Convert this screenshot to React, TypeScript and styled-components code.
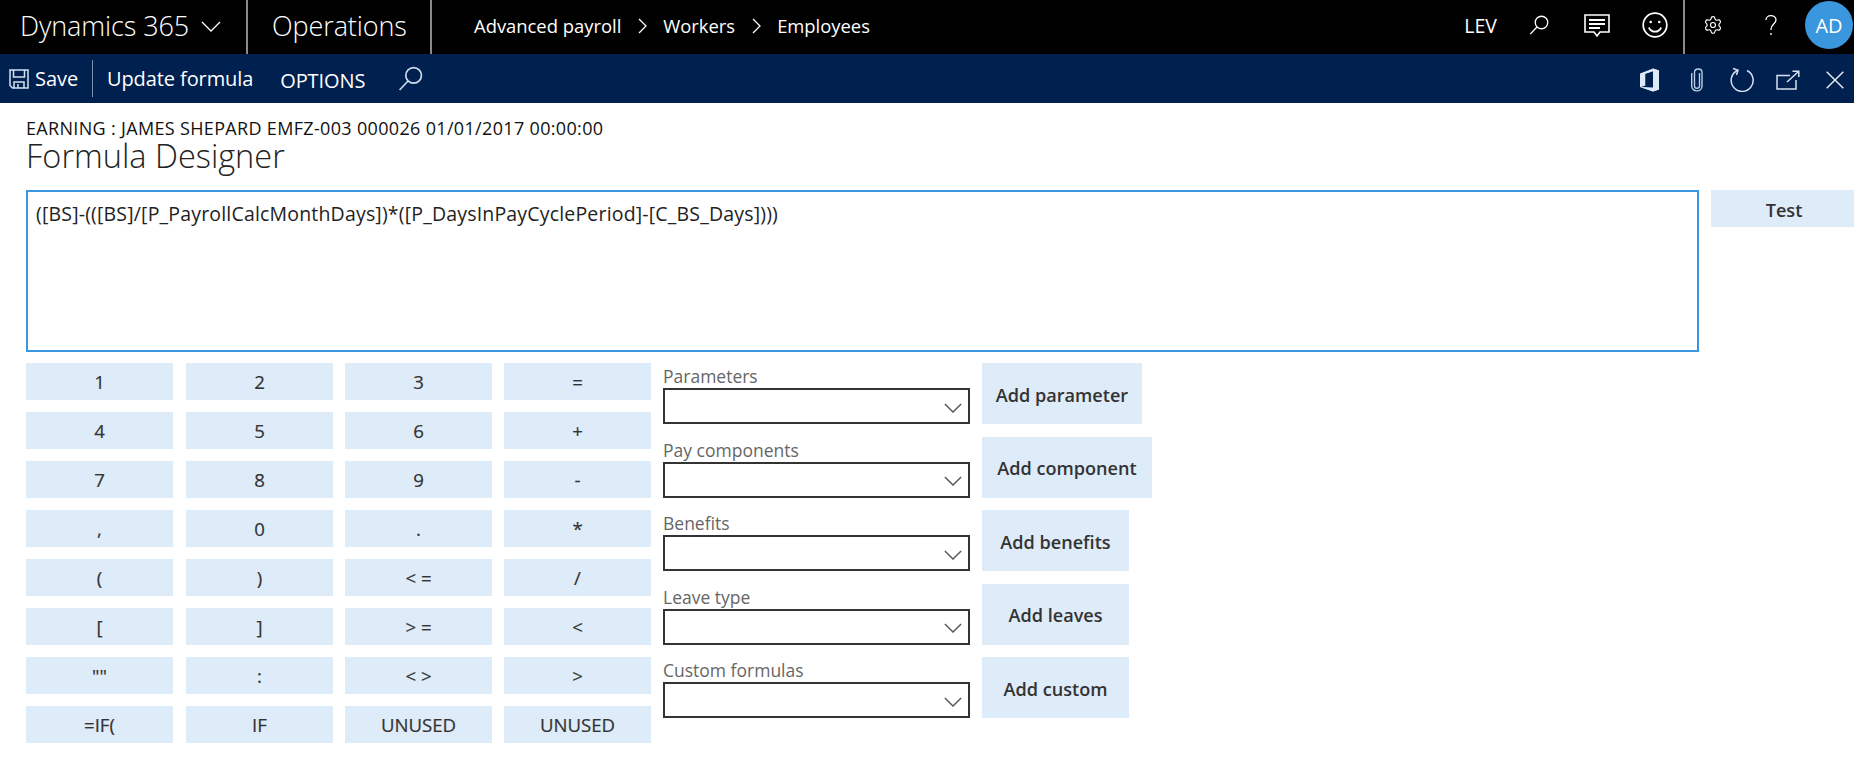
import React from 'react';
import styled, { createGlobalStyle } from 'styled-components';
import { Settings } from 'lucide-react';

const GlobalStyle = createGlobalStyle`
  html, body { margin: 0; padding: 0; background: #fff; overflow: hidden; }
  * { box-sizing: border-box; }
  body { font-family: "Open Sans", "Noto Sans", "Liberation Sans", sans-serif; }
`;

const Page = styled.div`
  width: 1854px;
  height: 781px;
  overflow: hidden;
`;

const TopBar = styled.header`
  display: flex;
  align-items: stretch;
  height: 54px;
  background: #000;
  color: #fff;
`;

const Brand = styled.div`
  display: flex;
  align-items: center;
  width: 248px;
  padding: 0 0 4px 20px;
  border-right: 2px solid #8a8a8a;
  font-size: 27px;
  font-weight: 300;
  letter-spacing: -0.1px;
  svg { margin-left: 12px; margin-top: 2px; }
`;

const Product = styled.div`
  display: flex;
  align-items: center;
  width: 184px;
  padding: 0 0 4px 24px;
  border-right: 2px solid #8a8a8a;
  font-size: 27px;
  font-weight: 300;
  letter-spacing: -0.1px;
`;

const Breadcrumb = styled.nav`
  display: flex;
  align-items: center;
  padding: 0 0 4px 42px;
  font-size: 18.4px;
  svg { margin: 1px 16px 0 17px; }
`;

const TopRight = styled.div`
  display: flex;
  align-items: center;
  margin-left: auto;
  padding: 0 1px 4px 0;
`;

const Company = styled.span`
  font-size: 19.5px;
`;

const IconCell = styled.span<{ $w: number; $ml: number }>`
  display: flex;
  flex: none;
  align-items: center;
  justify-content: center;
  width: ${(p) => p.$w}px;
  margin-left: ${(p) => p.$ml}px;
`;

const TopDivider = styled.span`
  width: 2px;
  height: 54px;
  margin: 0 0 -4px 15px;
  background: #8a8a8a;
`;

const Avatar = styled.span`
  display: flex;
  align-items: center;
  justify-content: center;
  width: 48px;
  height: 48px;
  margin-left: 28px;
  border-radius: 50%;
  background: #3a96dd;
  font-size: 20px;
`;

const CommandBar = styled.div`
  display: flex;
  align-items: center;
  height: 49px;
  background: #002050;
  color: #fff;
`;

const SaveButton = styled.div`
  display: flex;
  align-items: center;
  gap: 6px;
  width: 93px;
  height: 37px;
  padding-left: 9px;
  border-right: 1px solid #7d8fa8;
  font-size: 20px;
`;

const CommandText = styled.span<{ $gap: number; $drop?: number }>`
  margin-left: ${(p) => p.$gap}px;
  padding-top: ${(p) => p.$drop ?? 0}px;
  font-size: 20px;
  letter-spacing: -0.1px;
`;

const CommandRight = styled.div`
  display: flex;
  align-items: center;
  margin-left: auto;
  padding: 2px 10px 0 0;
`;

const Content = styled.main`
  padding: 14px 0 0 26px;
`;

const Caption = styled.div`
  font-size: 18px;
  line-height: 22px;
  letter-spacing: 0.33px;
  color: #111;
`;

const Title = styled.h1`
  margin: 0;
  font-size: 32.5px;
  line-height: 34px;
  font-weight: 300;
  color: #222;
`;

const EditorRow = styled.div`
  display: flex;
  gap: 12px;
  margin-top: 17px;
`;

const FormulaBox = styled.div`
  flex: none;
  width: 1673px;
  height: 162px;
  padding: 10px 8px;
  border: 2px solid #3a96dd;
  font-size: 19.5px;
  line-height: 24px;
  letter-spacing: 0.18px;
  color: #222;
`;

const ActionButton = styled.button<{ $w?: number; $h?: number }>`
  flex: none;
  width: ${(p) => p.$w ?? 147}px;
  height: ${(p) => p.$h ?? 37}px;
  padding: 2px 0 0;
  border: 0;
  background: #deebf8;
  color: #333;
  font-family: inherit;
  font-size: 18.1px;
  font-weight: 600;
`;

const Designer = styled.div`
  display: flex;
  gap: 12px;
  margin-top: 11px;
`;

const Keypad = styled.div`
  display: grid;
  grid-template-columns: 160px 159px 159px 147px;
  grid-auto-rows: 37px;
  row-gap: 12px;
`;

const Key = styled(ActionButton)`
  padding: 0;
  font-weight: 400;
  font-size: 18.6px;
  -webkit-text-stroke: 0.2px #333;
`;

const Lookups = styled.div`
  display: flex;
  flex-direction: column;
  gap: 12.5px;
`;

const LookupRow = styled.div`
  display: flex;
  gap: 12px;
  height: 61px;
`;

const Field = styled.div`
  width: 307px;
`;

const FieldLabel = styled.label`
  display: block;
  height: 25px;
  font-size: 17.5px;
  line-height: 26px;
  color: #666;
`;

const SelectBox = styled.div`
  display: flex;
  align-items: center;
  justify-content: flex-end;
  height: 36px;
  padding: 3px 6px 0 0;
  border: 2px solid #333;
  background: #fff;
`;

const Chevron = ({ size = 18, color = '#fff', sw = 1.3 }: { size?: number; color?: string; sw?: number }) => (
  <svg width={size} height={size / 2 + 1} viewBox="0 0 20 11" fill="none" stroke={color} strokeWidth={sw * 20 / size}>
    <path d="M1 1l9 9 9-9" />
  </svg>
);

const Crumb = () => (
  <svg width="9" height="16" viewBox="0 0 9 16" fill="none" stroke="#fff" strokeWidth="1.3">
    <path d="M1 1l7 7-7 7" />
  </svg>
);

const SearchIcon = ({ size, color }: { size: number; color: string }) => (
  <svg width={size} height={size} viewBox="0 0 24 24" fill="none" stroke={color} strokeWidth="1.6">
    <circle cx="15" cy="9" r="7.5" />
    <path d="M9.600 14.400L1.500 23" />
  </svg>
);

const MessageIcon = () => (
  <svg width="26" height="26" viewBox="0 -2 26 26" fill="none" stroke="#fff">
    <path d="M1 1h24v17H16l-3 4-3-4H1z" strokeWidth="1.6" />
    <path d="M5 6h16M5 10h16M5 14h11" strokeWidth="1.8" />
  </svg>
);

const SmileIcon = () => (
  <svg width="26" height="26" viewBox="0 0 26 26" fill="none" stroke="#fff" strokeWidth="1.7">
    <circle cx="13" cy="13" r="11.800" />
    <circle cx="8.700" cy="10" r="1.300" fill="#fff" stroke="none" />
    <circle cx="17.300" cy="10" r="1.300" fill="#fff" stroke="none" />
    <path d="M6.800 15.500c1.500 3 3.600 4.200 6.200 4.200s4.700-1.200 6.200-4.200" />
  </svg>
);

const HelpIcon = () => (
  <svg width="12" height="21" viewBox="0 0 12 21" fill="none" stroke="#fff" strokeWidth="1.3">
    <path d="M1 5c0-2.600 2-4.300 4.800-4.300S11 2.400 11 5c0 3.800-5 4.200-5 9v1" />
    <circle cx="6" cy="19" r=".9" fill="#fff" stroke="none" />
  </svg>
);

const SaveIcon = () => (
  <svg width="20" height="20" viewBox="0 0 20 20" fill="none" stroke="#d5e2f0" strokeWidth="1.5">
    <path d="M1 1h18v18H3.500L1 16.500z" />
    <path d="M4.500 1v7h11V1M5 19v-6h10v6M9 15v4" />
  </svg>
);

const OfficeIcon = () => (
  <svg width="20" height="24" viewBox="0 0 20 24" fill="#dce9f6">
    <path d="M0 5.500L13 .5l6 2v19l-6 2-13-4.500zM13 3.500L5.500 6v11.500l7.500-1.500z" fillRule="evenodd" />
    <path d="M5.500 6L13 3.500V19.500L1 19l4.500-1.500z" fill="#002050" />
    <path d="M13 .5l6 2v19l-6 2-12.500-4.500L13 20.500z" />
  </svg>
);

const ClipIcon = () => (
  <svg width="12" height="24" viewBox="0 0 12 24" fill="none" stroke="#b9cde3" strokeWidth="1.4">
    <path d="M8.500 5v13c0 3-5 3-5 0V4.500c0-4.600 7.500-4.600 7.500 0V18c0 6.500-10.300 6.500-10.300 0V5" />
  </svg>
);

const RefreshIcon = () => (
  <svg width="25" height="25" viewBox="0 0 25 25" fill="none" stroke="#d5e2f0" strokeWidth="1.5">
    <path d="M8 3.200A11 11 0 1 0 17 3.500" />
    <path d="M3 1.500L8 3.300 6.500 8" />
  </svg>
);

const PopoutIcon = () => (
  <svg width="24" height="20" viewBox="0 0 24 20" fill="none" stroke="#d5e2f0" strokeWidth="1.5">
    <path d="M14 5.500H1V19h19V10" />
    <path d="M11 12l11-10M16.500 1.200h6.300V7" />
  </svg>
);

const CloseIcon = () => (
  <svg width="18" height="18" viewBox="0 0 18 18" fill="none" stroke="#e8f0f8" strokeWidth="1.4">
    <path d="M.7.7l16.600 16.600M17.300.7L.7 17.300" />
  </svg>
);

const keys = [
  '1', '2', '3', '=',
  '4', '5', '6', '+',
  '7', '8', '9', '-',
  ',', '0', '.', '*',
  '(', ')', '< =', '/',
  '[', ']', '> =', '<',
  '""', ':', '< >', '>',
  '=IF(', 'IF', 'UNUSED', 'UNUSED',
];

const lookups = [
  { label: 'Parameters', action: 'Add parameter', width: 160 },
  { label: 'Pay components', action: 'Add component', width: 170 },
  { label: 'Benefits', action: 'Add benefits', width: 147 },
  { label: 'Leave type', action: 'Add leaves', width: 147 },
  { label: 'Custom formulas', action: 'Add custom', width: 147 },
];

const App = () => {
  return (
    <Page>
      <GlobalStyle />
      <TopBar>
        <Brand>
          Dynamics 365
          <Chevron size={20} />
        </Brand>
        <Product>Operations</Product>
        <Breadcrumb>
          Advanced payroll
          <Crumb />
          Workers
          <Crumb />
          Employees
        </Breadcrumb>
        <TopRight>
          <Company>LEV</Company>
          <IconCell $w={20} $ml={32}><SearchIcon size={20} color="#fff" /></IconCell>
          <IconCell $w={26} $ml={35}><MessageIcon /></IconCell>
          <IconCell $w={26} $ml={32}><SmileIcon /></IconCell>
          <TopDivider />
          <IconCell $w={20} $ml={18}><Settings size={20} color="#fff" strokeWidth={1.4} /></IconCell>
          <IconCell $w={12} $ml={42}><HelpIcon /></IconCell>
          <Avatar>AD</Avatar>
        </TopRight>
      </TopBar>
      <CommandBar>
        <SaveButton>
          <SaveIcon />
          Save
        </SaveButton>
        <CommandText $gap={14}>Update formula</CommandText>
        <CommandText $gap={27} $drop={4}>OPTIONS</CommandText>
        <IconCell $w={25} $ml={33}><SearchIcon size={25} color="#cddcec" /></IconCell>
        <CommandRight>
          <IconCell $w={20} $ml={0}><OfficeIcon /></IconCell>
          <IconCell $w={12} $ml={31}><ClipIcon /></IconCell>
          <IconCell $w={25} $ml={27}><RefreshIcon /></IconCell>
          <IconCell $w={24} $ml={21}><PopoutIcon /></IconCell>
          <IconCell $w={18} $ml={26}><CloseIcon /></IconCell>
        </CommandRight>
      </CommandBar>
      <Content>
        <Caption>EARNING : JAMES SHEPARD EMFZ-003 000026 01/01/2017 00:00:00</Caption>
        <Title>Formula Designer</Title>
        <EditorRow>
          <FormulaBox>([BS]-(([BS]/[P_PayrollCalcMonthDays])*([P_DaysInPayCyclePeriod]-[C_BS_Days])))</FormulaBox>
          <ActionButton $w={146}>Test</ActionButton>
        </EditorRow>
        <Designer>
          <Keypad>
            {keys.map((k, i) => (
              <Key key={i}>{k}</Key>
            ))}
          </Keypad>
          <Lookups>
            {lookups.map((l) => (
              <LookupRow key={l.label}>
                <Field>
                  <FieldLabel>{l.label}</FieldLabel>
                  <SelectBox>
                    <Chevron size={18} color="#555" sw={1.4} />
                  </SelectBox>
                </Field>
                <ActionButton $w={l.width} $h={61}>{l.action}</ActionButton>
              </LookupRow>
            ))}
          </Lookups>
        </Designer>
      </Content>
    </Page>
  );
};

export default App;
